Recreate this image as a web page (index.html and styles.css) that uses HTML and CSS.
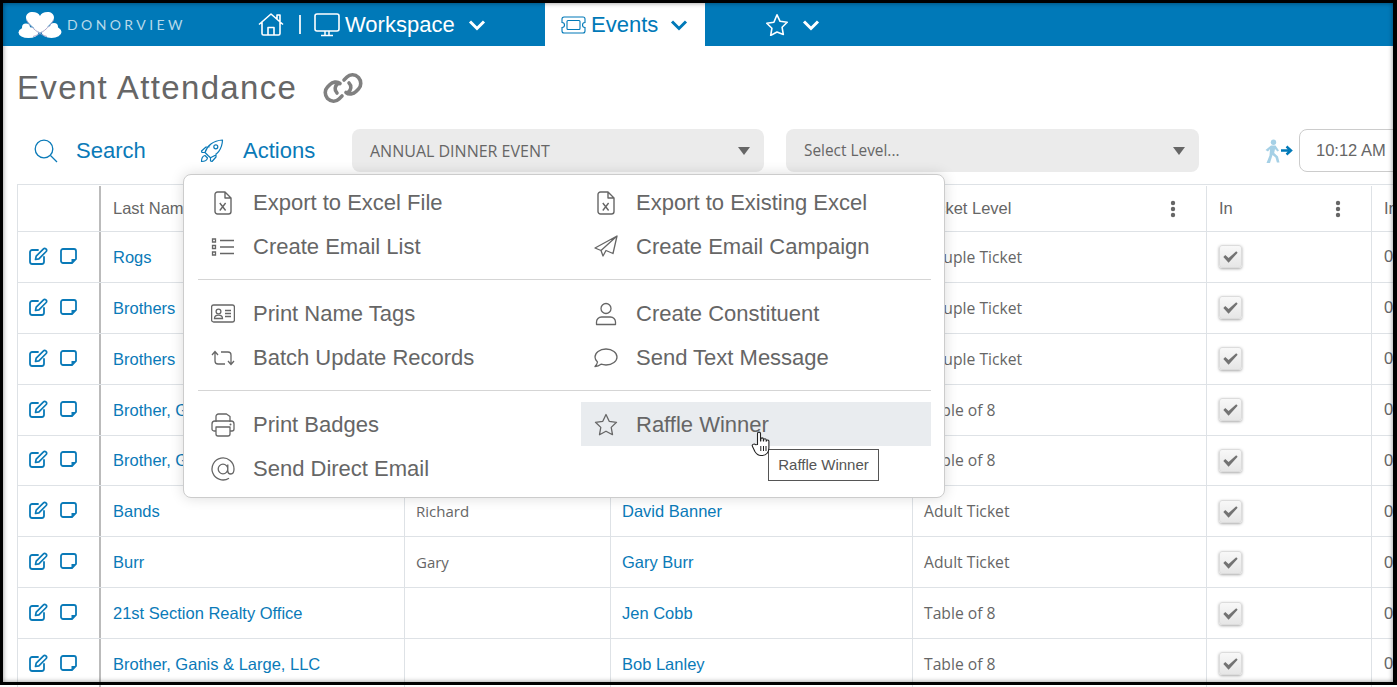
FILE: index.html
```html
<!DOCTYPE html>
<html lang="en">
<head>
<meta charset="utf-8">
<title>Event Attendance</title>
<link rel="stylesheet" href="styles.css">
</head>
<body>
<svg class="defs" aria-hidden="true">
  <symbol id="i-edit" viewBox="0 0 19 18">
    <path d="M9 3H3.2A2.2 2.2 0 0 0 1 5.2v9.6A2.2 2.2 0 0 0 3.2 17h9.6a2.2 2.2 0 0 0 2.2-2.2V10" fill="none" stroke="currentColor" stroke-width="1.8" stroke-linecap="round"/>
    <path d="M6.500 12.500l.7-3.400 7.300-7.300a1.600 1.600 0 0 1 2.300 0l.4.4a1.600 1.600 0 0 1 0 2.300l-7.300 7.300z" fill="none" stroke="currentColor" stroke-width="1.700" stroke-linejoin="round"/>
  </symbol>
  <symbol id="i-note" viewBox="0 0 17 16">
    <path d="M3 1h11a2 2 0 0 1 2 2v8l-4 4H3a2 2 0 0 1-2-2V3a2 2 0 0 1 2-2z" fill="none" stroke="currentColor" stroke-width="1.800"/>
    <path d="M11.500 15v-4h4.500z" fill="currentColor"/>
  </symbol>
  <symbol id="i-check" viewBox="0 0 22 22">
    <path d="M3.500 11.500l2-2 3.500 3.200 8-7.200 1.500 1.500-9.500 10.500z" fill="currentColor"/>
  </symbol>
  <symbol id="i-file" viewBox="0 0 18 24">
    <path d="M11 1H3.500A2.500 2.500 0 0 0 1 3.500v17A2.500 2.500 0 0 0 3.500 23h11a2.500 2.500 0 0 0 2.500-2.500V7zM11 1v6h6" fill="none" stroke="currentColor" stroke-width="1.400" stroke-linejoin="round"/>
    <path d="M5.800 12l5.800 7.500M11.600 12l-5.800 7.500" fill="none" stroke="currentColor" stroke-width="1.400"/>
  </symbol>
  <symbol id="i-kebab" viewBox="0 0 6 18">
    <circle cx="3" cy="3" r="2.200" fill="currentColor"/><circle cx="3" cy="9" r="2.200" fill="currentColor"/><circle cx="3" cy="15" r="2.200" fill="currentColor"/>
  </symbol>
</svg>

<div class="page">
  <nav class="nav">
    <div class="logo">
      <svg class="logo-mark" viewBox="0 0 44 26" aria-hidden="true">
        <g fill="#fff">
          <path d="M22 21C14 14 8 10 8 5.500C8 2 11 0 14.500 0C18 0 21 1.500 22 4C23 1.500 26 0 29.500 0C33 0 36 2 36 5.500C36 10 30 14 22 21Z"/>
          <ellipse cx="10.500" cy="20.500" rx="10" ry="5.500"/><circle cx="8" cy="15.500" r="4"/>
          <ellipse cx="33.500" cy="20" rx="10" ry="6"/><circle cx="36" cy="15" r="4"/>
        </g>
        <path d="M8.500 8C12 15 22 23 29 24.500M35.500 8C32 15 22 23 15 24.500" fill="none" stroke="#a79fc6" stroke-width=".9"/>
      </svg>
      <span class="logo-text">DONORVIEW</span>
    </div>
    <svg class="ico-home" viewBox="0 0 26 24" aria-hidden="true">
      <path d="M1 12.500L13 2l12 10.500M19 7V3h3v7M4 10v11.500a1.500 1.500 0 0 0 1.500 1.500h15a1.500 1.500 0 0 0 1.500-1.500V10M10 23v-7.500h6V23" fill="none" stroke="currentColor" stroke-width="1.600" stroke-linejoin="round"/>
    </svg>
    <span class="pipe"></span>
    <div class="nav-item nav-workspace">
      <svg class="ico-monitor" viewBox="0 0 26 24" aria-hidden="true">
        <rect x="1" y="1" width="24" height="17" rx="2" fill="none" stroke="currentColor" stroke-width="1.600"/>
        <path d="M11 18v4M15 18v4M7 22.500h12" fill="none" stroke="currentColor" stroke-width="1.500"/>
      </svg>
      <span>Workspace</span>
      <svg class="chev" viewBox="0 0 18 12" aria-hidden="true"><path d="M2 2.500l7 7 7-7" fill="none" stroke="currentColor" stroke-width="3"/></svg>
    </div>
    <div class="nav-item nav-events">
      <svg class="ico-ticket" viewBox="0 0 25 18" aria-hidden="true">
        <path d="M3 1h19a2 2 0 0 1 2 2v3.500a2.500 2.500 0 0 0 0 5V15a2 2 0 0 1-2 2H3a2 2 0 0 1-2-2v-3.500a2.500 2.500 0 0 0 0-5V3a2 2 0 0 1 2-2z" fill="none" stroke="currentColor" stroke-width="1.100"/>
        <rect x="6" y="4.500" width="13" height="9" rx="1" fill="none" stroke="currentColor" stroke-width="1.100"/>
      </svg>
      <span>Events</span>
      <svg class="chev" viewBox="0 0 18 12" aria-hidden="true"><path d="M2 2.500l7 7 7-7" fill="none" stroke="currentColor" stroke-width="3"/></svg>
    </div>
    <div class="nav-item nav-fav">
      <svg class="ico-star" viewBox="0 0 24 23" aria-hidden="true">
        <path d="M12 1.800l3.100 6.500 7.100 1-5.100 5 1.200 7.100L12 19l-6.300 3.400 1.200-7.100-5.100-5 7.100-1z" fill="none" stroke="currentColor" stroke-width="1.600" stroke-linejoin="round"/>
      </svg>
      <svg class="chev" viewBox="0 0 18 12" aria-hidden="true"><path d="M2 2.500l7 7 7-7" fill="none" stroke="currentColor" stroke-width="3"/></svg>
    </div>
  </nav>

  <header class="title-row">
    <h1 class="title">Event Attendance</h1>
    <svg class="ico-link" viewBox="0 0 40 32" aria-hidden="true">
      <path d="M17 11.500C14 9 9.500 10 7 12.500L4.500 15C1.500 18 1.500 23 4.500 26.500C8 30 13 30 16 27L19 24M23 20.500C26 23 30.500 22 33 19.500L35.500 17C38.500 14 38.500 9 35.500 5.500C32 2 27 2 24 5L21 8M14 21C11 18 12 14 14.500 12M26 11C29 14 28 18 25.500 20" fill="none" stroke="#808080" stroke-width="3.600" stroke-linecap="round"/>
    </svg>
  </header>

  <div class="toolbar">
    <div class="tool tool-search">
      <svg class="ico-tool" viewBox="0 0 24 24" aria-hidden="true"><circle cx="10" cy="10" r="8.800" fill="none" stroke="currentColor" stroke-width="1.300"/><path d="M16.500 16.500L23 23" stroke="currentColor" stroke-width="1.300"/></svg>
      <span>Search</span>
    </div>
    <div class="tool tool-actions">
      <svg class="ico-tool" viewBox="0 0 24 24" aria-hidden="true">
        <path d="M8 16.500l-3-3C7 7 13 1.500 22.500 1c-.300 9.500-6 15.500-12 17.800zM5 13.500H2L1.500 12 6 8h3.500M10.500 18.800V22l1.500.500 4-4.500v-3.500" fill="none" stroke="currentColor" stroke-width="1.200" stroke-linejoin="round"/>
        <circle cx="15.800" cy="7.800" r="2" fill="none" stroke="currentColor" stroke-width="1.200"/>
        <path d="M5 16.500C2.500 17 1.500 20 1.500 22.500 4 22.500 7 21.500 7.500 19z" fill="none" stroke="currentColor" stroke-width="1.200" stroke-linejoin="round"/>
      </svg>
      <span>Actions</span>
    </div>
    <div class="select select-event"><span>ANNUAL DINNER EVENT</span><i class="caret"></i></div>
    <div class="select select-level"><span>Select Level...</span><i class="caret"></i></div>
    <svg class="ico-walk" viewBox="0 0 30 24" aria-hidden="true">
      <circle cx="9.500" cy="3.200" r="2.700" fill="#a5d0e6"/>
      <path d="M7 6.500h4.500l3.500 5-1.500 1-2.500-2.500-.800 4 3.800 3.500 1.500 6h-2.600l-1.400-5-3-2.500L6 24H2.500l3-7.500L6 10l-2 2.500L1.500 11z" fill="#a5d0e6"/>
      <path d="M17 11.500h8M22.500 7.500l4.500 4-4.500 4" fill="none" stroke="#0079b8" stroke-width="2.400"/>
    </svg>
    <div class="time">10:12 AM</div>
  </div>

  <main class="grid">
    <div class="row head">
      <div class="cell cell-tools"></div>
      <div class="cell">Last Name</div>
      <div class="cell"></div>
      <div class="cell"></div>
      <div class="cell cell-k">Ticket Level<svg class="kebab"><use href="#i-kebab"/></svg></div>
      <div class="cell cell-k">In<svg class="kebab"><use href="#i-kebab"/></svg></div>
      <div class="cell">In</div>
    </div>
    <div class="row">
      <div class="cell cell-tools"><svg class="edit"><use href="#i-edit"/></svg><svg class="note"><use href="#i-note"/></svg></div>
      <div class="cell"><a class="link">Rogs</a></div><div class="cell"></div><div class="cell"></div>
      <div class="cell ticket">Couple Ticket</div>
      <div class="cell"><span class="check"><svg><use href="#i-check"/></svg></span></div><div class="cell">0</div>
    </div>
    <div class="row">
      <div class="cell cell-tools"><svg class="edit"><use href="#i-edit"/></svg><svg class="note"><use href="#i-note"/></svg></div>
      <div class="cell"><a class="link">Brothers</a></div><div class="cell"></div><div class="cell"></div>
      <div class="cell ticket">Couple Ticket</div>
      <div class="cell"><span class="check"><svg><use href="#i-check"/></svg></span></div><div class="cell">0</div>
    </div>
    <div class="row">
      <div class="cell cell-tools"><svg class="edit"><use href="#i-edit"/></svg><svg class="note"><use href="#i-note"/></svg></div>
      <div class="cell"><a class="link">Brothers</a></div><div class="cell"></div><div class="cell"></div>
      <div class="cell ticket">Couple Ticket</div>
      <div class="cell"><span class="check"><svg><use href="#i-check"/></svg></span></div><div class="cell">0</div>
    </div>
    <div class="row">
      <div class="cell cell-tools"><svg class="edit"><use href="#i-edit"/></svg><svg class="note"><use href="#i-note"/></svg></div>
      <div class="cell"><a class="link">Brother, Ganis &amp; Large, LLC</a></div><div class="cell"></div><div class="cell"></div>
      <div class="cell ticket">Table of 8</div>
      <div class="cell"><span class="check"><svg><use href="#i-check"/></svg></span></div><div class="cell">0</div>
    </div>
    <div class="row">
      <div class="cell cell-tools"><svg class="edit"><use href="#i-edit"/></svg><svg class="note"><use href="#i-note"/></svg></div>
      <div class="cell"><a class="link">Brother, Ganis &amp; Large, LLC</a></div><div class="cell"></div><div class="cell"></div>
      <div class="cell ticket">Table of 8</div>
      <div class="cell"><span class="check"><svg><use href="#i-check"/></svg></span></div><div class="cell">0</div>
    </div>
    <div class="row">
      <div class="cell cell-tools"><svg class="edit"><use href="#i-edit"/></svg><svg class="note"><use href="#i-note"/></svg></div>
      <div class="cell"><a class="link">Bands</a></div><div class="cell person">Richard</div><div class="cell"><a class="link">David Banner</a></div>
      <div class="cell ticket">Adult Ticket</div>
      <div class="cell"><span class="check"><svg><use href="#i-check"/></svg></span></div><div class="cell">0</div>
    </div>
    <div class="row">
      <div class="cell cell-tools"><svg class="edit"><use href="#i-edit"/></svg><svg class="note"><use href="#i-note"/></svg></div>
      <div class="cell"><a class="link">Burr</a></div><div class="cell person">Gary</div><div class="cell"><a class="link">Gary Burr</a></div>
      <div class="cell ticket">Adult Ticket</div>
      <div class="cell"><span class="check"><svg><use href="#i-check"/></svg></span></div><div class="cell">0</div>
    </div>
    <div class="row">
      <div class="cell cell-tools"><svg class="edit"><use href="#i-edit"/></svg><svg class="note"><use href="#i-note"/></svg></div>
      <div class="cell"><a class="link">21st Section Realty Office</a></div><div class="cell"></div><div class="cell"><a class="link">Jen Cobb</a></div>
      <div class="cell ticket">Table of 8</div>
      <div class="cell"><span class="check"><svg><use href="#i-check"/></svg></span></div><div class="cell">0</div>
    </div>
    <div class="row">
      <div class="cell cell-tools"><svg class="edit"><use href="#i-edit"/></svg><svg class="note"><use href="#i-note"/></svg></div>
      <div class="cell"><a class="link">Brother, Ganis &amp; Large, LLC</a></div><div class="cell"></div><div class="cell"><a class="link">Bob Lanley</a></div>
      <div class="cell ticket">Table of 8</div>
      <div class="cell"><span class="check"><svg><use href="#i-check"/></svg></span></div><div class="cell">0</div>
    </div>
  </main>

  <div class="menu">
    <div class="menu-group">
      <a class="menu-item"><svg class="mi" viewBox="0 0 24 24"><use href="#i-file" x="3" width="18" height="24"/></svg>Export to Excel File</a>
      <a class="menu-item"><svg class="mi" viewBox="0 0 24 24"><use href="#i-file" x="3" width="18" height="24"/></svg>Export to Existing Excel</a>
      <a class="menu-item"><svg class="mi" viewBox="0 0 24 24"><path d="M9 5.500h14M9 12h14M9 18.500h14" stroke="currentColor" stroke-width="1.300"/><path d="M1.500 4h3v3h-3zM1.500 10.500h3v3h-3zM1.500 17h3v3h-3z" fill="none" stroke="currentColor" stroke-width="1.300"/></svg>Create Email List</a>
      <a class="menu-item"><svg class="mi" viewBox="0 0 24 24"><path d="M23 1L1 13l6 2.500L23 1l-4 17.500-7-3-3 5.500-2-5.500" fill="none" stroke="currentColor" stroke-width="1.300" stroke-linejoin="round"/></svg>Create Email Campaign</a>
    </div>
    <hr class="menu-sep">
    <div class="menu-group">
      <a class="menu-item"><svg class="mi" viewBox="0 0 24 24"><rect x="0.600" y="3" width="22.800" height="17" rx="2" fill="none" stroke="currentColor" stroke-width="1.300"/><circle cx="7.500" cy="9.500" r="2.400" fill="none" stroke="currentColor" stroke-width="1.300"/><path d="M3.500 16.500c0-4.500 8-4.500 8 0zM14 8.500h6M14 11.500h6M14 14.500h6" fill="none" stroke="currentColor" stroke-width="1.300"/></svg>Print Name Tags</a>
      <a class="menu-item"><svg class="mi" viewBox="0 0 24 24"><circle cx="12" cy="6.500" r="5" fill="none" stroke="currentColor" stroke-width="1.300"/><path d="M2.500 22.500v-2.500a5 5 0 0 1 5-5h9a5 5 0 0 1 5 5v2.500z" fill="none" stroke="currentColor" stroke-width="1.300" stroke-linejoin="round"/></svg>Create Constituent</a>
      <a class="menu-item"><svg class="mi" viewBox="0 0 24 24"><path d="M1 9l3-3.500L7 9M4 6v9a3 3 0 0 0 3 3h7M10 6h7a3 3 0 0 1 3 3v9M17 15l3 3.500 3-3.500" fill="none" stroke="currentColor" stroke-width="1.300"/></svg>Batch Update Records</a>
      <a class="menu-item"><svg class="mi" viewBox="0 0 24 24"><path d="M12 3C5.500 3 1 6.800 1 11c0 2 .900 3.700 2.500 5-.300 1.800-1.300 3.300-2.500 4.500 2.500 0 4.500-1 6-2.300 1.500.500 3.200.800 5 .800 6.500 0 11-3.800 11-8s-4.500-8-11-8z" fill="none" stroke="currentColor" stroke-width="1.300" stroke-linejoin="round"/></svg>Send Text Message</a>
    </div>
    <hr class="menu-sep">
    <div class="menu-group">
      <a class="menu-item"><svg class="mi" viewBox="0 0 24 24"><path d="M5 9V3.500A2.500 2.500 0 0 1 7.500 1h8L19 3.500V9M5 18H3a2 2 0 0 1-2-2v-5a3 3 0 0 1 3-3h16a3 3 0 0 1 3 3v5a2 2 0 0 1-2 2h-2M5 14h14v7a2 2 0 0 1-2 2H7a2 2 0 0 1-2-2z" fill="none" stroke="currentColor" stroke-width="1.300" stroke-linejoin="round"/><circle cx="19.500" cy="11.500" r="1" fill="currentColor"/></svg>Print Badges</a>
      <a class="menu-item is-hover"><svg class="mi" viewBox="0 0 24 24"><path d="M12 1.500l3.200 6.800 7.300 1-5.300 5.100 1.300 7.300-6.500-3.500-6.500 3.500 1.300-7.300-5.300-5.100 7.300-1z" fill="none" stroke="currentColor" stroke-width="1.300" stroke-linejoin="round"/></svg>Raffle Winner</a>
      <a class="menu-item"><svg class="mi" viewBox="0 0 24 24"><path d="M23 12c0 3-1 5-3.200 5-1.800 0-3-1.200-3-3V7.500M16.800 12a4.800 4.800 0 1 1-9.600 0 4.800 4.800 0 0 1 9.600 0zM23 12A11 11 0 1 0 18 21.200" fill="none" stroke="currentColor" stroke-width="1.300"/></svg>Send Direct Email</a>
    </div>
    <div class="tooltip">Raffle Winner</div>
    <svg class="hand" viewBox="0 0 20 26" aria-hidden="true">
      <path d="M6.500 13.500V2.600a1.500 1.500 0 0 1 3 0V10l.3-.1V8.200a1.300 1.300 0 0 1 2.600 0V10h.2V9a1.300 1.300 0 0 1 2.600 0v1.200h.1a1.300 1.300 0 0 1 2.600.300v6.500c0 4-2.500 7.500-6.500 7.500h-1.500c-3 0-4.500-1.500-6-4L1.500 15.500c-1-1.800 1.500-3.300 3-1.800z" fill="#fff" stroke="#222" stroke-width="1.100" stroke-linejoin="round"/>
      <path d="M9.800 15v5M12.500 15v5M15 15v5" stroke="#222" stroke-width="1"/>
    </svg>
  </div>

  <div class="frame"></div>
</div>
</body>
</html>
```

FILE: styles.css
```css
* { box-sizing: border-box; }

html, body {
  margin: 0;
  padding: 0;
  background: #fff;
  overflow: hidden;
}

body {
  font-family: "Liberation Sans", Arial, sans-serif;
  color: #666;
}

.defs {
  position: absolute;
  width: 0;
  height: 0;
}

.page {
  position: relative;
  width: 1397px;
  height: 687px;
  overflow: hidden;
  background: #fff;
}

.frame {
  position: absolute;
  top: 0;
  left: 0;
  width: 1397px;
  height: 685px;
  border-style: solid;
  border-color: #000;
  border-width: 3px 4px 3px 3px;
  box-shadow: inset 0 0 5px rgba(0, 0, 0, .45);
  pointer-events: none;
}

/* nav */
.nav {
  display: flex;
  align-items: center;
  height: 46px;
  background: #0079b8;
  color: #fff;
  font-size: 22px;
}

.logo {
  display: flex;
  align-items: center;
  flex: none;
  width: 240px;
  margin-left: 18px;
  padding-top: 3px;
}

.logo-mark {
  width: 44px;
  height: 26px;
  margin-top: 1px;
}

.logo-text {
  margin-left: 5px;
  font-family: Lato, sans-serif;
  font-size: 14px;
  letter-spacing: 3.4px;
  color: #b7d9ea;
}

.ico-home {
  flex: none;
  width: 26px;
  height: 24px;
  margin-top: 2px;
}

.pipe {
  flex: none;
  width: 2px;
  height: 19px;
  margin: 3px 13px 0 15px;
  background: #dcecf5;
}

.nav-item {
  display: flex;
  align-items: center;
  flex: none;
  padding-top: 3px;
}

.ico-monitor {
  width: 26px;
  height: 24px;
  margin-right: 5px;
}

.chev {
  width: 18px;
  height: 12px;
}

.nav-workspace {
  width: 231px;
}

.nav-workspace .chev {
  margin-left: 13px;
}

.nav-events {
  align-self: stretch;
  width: 160px;
  padding-left: 16px;
  background: #fff;
  color: #0079b8;
}

.ico-ticket {
  width: 25px;
  height: 18px;
  margin-right: 5px;
}

.nav-events .chev {
  margin-left: 12px;
}

.nav-fav {
  margin-left: 60px;
}

.ico-star {
  width: 24px;
  height: 23px;
  margin-right: 13px;
}

/* title */
.title-row {
  display: flex;
  align-items: center;
  height: 83px;
  padding-left: 17px;
}

.title {
  margin: 0;
  font-size: 33px;
  font-weight: 400;
  letter-spacing: 1.35px;
  color: #666;
}

.ico-link {
  width: 40px;
  height: 32px;
  margin-left: 26px;
}

/* toolbar */
.toolbar {
  display: flex;
  align-items: center;
  height: 43px;
  font-size: 22px;
  color: #0a7ab8;
}

.tool {
  display: flex;
  align-items: center;
  flex: none;
}

.ico-tool {
  width: 24px;
  height: 24px;
  flex: none;
}

.tool-search {
  width: 166px;
  margin-left: 34px;
  gap: 18px;
}

.tool-actions {
  width: 152px;
  gap: 19px;
}

.select {
  display: flex;
  align-items: center;
  justify-content: space-between;
  flex: none;
  height: 43px;
  padding: 0 14px 0 18px;
  border-radius: 8px;
  background: #ebebeb;
  font-family: "Open Sans", sans-serif;
  font-size: 16px;
  color: #666;
}

.select-event {
  width: 412px;
  margin-right: 22px;
}

.select-level {
  width: 413px;
  font-size: 15.4px;
}

.caret {
  width: 0;
  height: 0;
  border-style: solid;
  border-width: 8px 6px 0 6px;
  border-color: #666 transparent transparent transparent;
}

.ico-walk {
  width: 30px;
  height: 24px;
  margin: 0 5px 0 65px;
  flex: none;
}

.time {
  display: flex;
  align-items: center;
  flex: none;
  width: 120px;
  height: 43px;
  padding-left: 16px;
  border: 1px solid #ccc;
  border-radius: 8px;
  font-size: 16.5px;
  color: #666;
}

/* table */
.grid {
  width: 1500px;
  margin: 12px 0 0 17px;
  font-size: 16.5px;
  color: #666;
}

.row {
  display: grid;
  grid-template-columns: 83px 304px 206px 302px 294px 165px 130px;
  height: 50.875px;
  border-left: 1px solid #dee2e6;
  border-bottom: 1px solid #dee2e6;
}

.row.head {
  height: 48px;
  border-top: 1px solid #dee2e6;
  padding-top: 1px;
}

.cell {
  display: flex;
  align-items: center;
  padding-left: 12px;
  border-right: 1px solid #dee2e6;
  white-space: nowrap;
  overflow: hidden;
}

.cell:nth-child(3),
.cell:nth-child(4),
.cell:nth-child(5) {
  padding-left: 11px;
}

.cell-tools {
  gap: 12px;
  padding-left: 11px;
  padding-bottom: 2px;
  border-right: 2px solid #bbb;
}

.cell-k {
  justify-content: space-between;
  padding-right: 30px;
}

.link {
  padding-top: 1px;
  color: #0a7ab8;
}

.ticket {
  font-family: "Open Sans", sans-serif;
  font-size: 15.7px;
}

.person {
  font-family: "Open Sans", sans-serif;
  font-size: 15px;
}

.edit {
  flex: none;
  width: 19px;
  height: 18px;
  color: #0a7ab8;
}

.note {
  flex: none;
  width: 17px;
  height: 16px;
  color: #0a7ab8;
}

.kebab {
  flex: none;
  width: 6px;
  height: 18px;
  color: #666;
}

.check {
  display: block;
  width: 23px;
  height: 23px;
  border: 1px solid #dcdcdc;
  border-radius: 3px;
  background: linear-gradient(#f8f8f8, #e6e6e6);
  box-shadow: 0 1px 3px rgba(0, 0, 0, .35);
  color: #737373;
}

.check svg {
  display: block;
  width: 21px;
  height: 21px;
}

/* actions menu */
.menu {
  position: absolute;
  top: 174px;
  left: 183px;
  width: 762px;
  height: 324px;
  padding: 5px 13px 0 14px;
  border: 1px solid #ccc;
  border-radius: 8px;
  background: #fff;
  box-shadow: 0 0 14px rgba(0, 0, 0, .14);
  font-size: 22px;
  color: #666;
}

.menu-group {
  display: grid;
  grid-template-columns: 383px 350px;
  grid-auto-rows: 44px;
}

.menu-item {
  display: flex;
  align-items: center;
  padding: 2px 0 0 13px;
  white-space: nowrap;
}

.mi {
  width: 24px;
  height: 24px;
  margin-right: 18px;
  flex: none;
  color: #666;
}

.is-hover {
  background: #e9ecef;
}

.menu-sep {
  height: 1px;
  margin: 11px 0;
  border: 0;
  background: #d5d5d5;
}

.tooltip {
  position: absolute;
  top: 274px;
  left: 584px;
  width: 111px;
  height: 32px;
  border: 1px solid #555;
  background: #fff;
  font-size: 15px;
  line-height: 30px;
  text-align: center;
  color: #555;
}

.hand {
  position: absolute;
  top: 256px;
  left: 567px;
  width: 20px;
  height: 26px;
}
```
